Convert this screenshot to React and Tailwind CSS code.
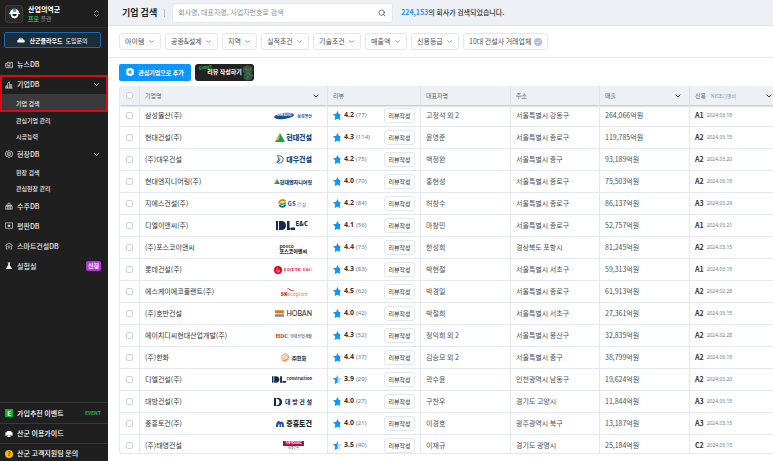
import React from "react";
import { ChevronDown, ChevronsUpDown, Search, Check } from "lucide-react";

const companies = [
  ["삼성물산(주)", "samsung", "4.2", 77, "고정석 외 2", "서울특별시 강동구", "264,066억원", "A1", "2024.03.15"],
  ["현대건설(주)", "hyundai", "4.3", 114, "윤영준", "서울특별시 종로구", "119,785억원", "A2", "2024.03.15"],
  ["(주)대우건설", "daewoo", "4.2", 75, "백정완", "서울특별시 중구", "93,189억원", "A2", "2024.03.20"],
  ["현대엔지니어링(주)", "hec", "4.0", 70, "홍현성", "서울특별시 종로구", "75,503억원", "A2", "2024.03.15"],
  ["지에스건설(주)", "gs", "4.2", 84, "허창수", "서울특별시 종로구", "86,137억원", "A3", "2024.03.29"],
  ["디엘이앤씨(주)", "dlenc", "4.1", 56, "마창민", "서울특별시 종로구", "52,757억원", "A1", "2024.03.21"],
  ["(주)포스코이앤씨", "posco", "4.4", 73, "한성희", "경상북도 포항시", "81,245억원", "A2", "2024.03.15"],
  ["롯데건설(주)", "lotte", "4.3", 83, "박현철", "서울특별시 서초구", "59,313억원", "A1", "2024.03.15"],
  ["에스케이에코플랜트(주)", "sk", "4.5", 62, "박경일", "서울특별시 종로구", "61,913억원", "A2", "2024.02.28"],
  ["(주)호반건설", "hoban", "4.0", 42, "박철희", "서울특별시 서초구", "27,361억원", "A2", "2024.03.15"],
  ["에이치디씨현대산업개발(주)", "hdc", "4.3", 52, "정익희 외 2", "서울특별시 용산구", "32,835억원", "A2", "2024.02.28"],
  ["(주)한화", "hanwha", "4.4", 37, "김승모 외 2", "서울특별시 중구", "38,799억원", "A2", "2024.03.15"],
  ["디엘건설(주)", "dlcon", "3.9", 29, "곽수윤", "인천광역시 남동구", "19,624억원", "A2", "2024.03.20"],
  ["대방건설(주)", "daebang", "4.0", 27, "구찬우", "경기도 고양시", "11,844억원", "A3", "2024.03.15"],
  ["중흥토건(주)", "jungheung", "4.0", 21, "이경호", "광주광역시 북구", "13,187억원", "A3", "2024.03.15"],
  ["(주)태영건설", "taeyoung", "3.5", 40, "이재규", "경기도 광명시", "25,184억원", "C2", "2024.03.15"],
];

const filters = ["아이템", "공종&설계", "지역", "실적조건", "기술조건", "매출액", "신용등급"];

function DLMark() {
  return (
    <svg viewBox="0 0 38 18" className="h-[9px] w-[19px]" fill="#16294a">
      <path d="M0 0h4v18H0zM6 0h4c7 0 10 4 10 9s-3 9-10 9H6zM22 0h5v13h2v5h-7zM30 13h8v5h-8z" />
    </svg>
  );
}

function Logo({ kind }) {
  switch (kind) {
    case "samsung":
      return (
        <>
          <span className="relative flex h-2 w-5 items-center justify-center">
            <svg viewBox="0 0 40 16" className="absolute inset-0 h-full w-full">
              <ellipse cx="20" cy="8" rx="20" ry="6" fill="#1450a0" transform="rotate(-7 20 8)" />
            </svg>
            <span className="relative text-[3px] leading-none font-bold text-white">SAMSUNG</span>
          </span>
          <span className="ml-[3px] text-[4px] font-bold text-[#2b55a5]">삼성물산</span>
        </>
      );
    case "hyundai":
      return (
        <>
          <svg viewBox="0 0 20 18" className="mr-px h-[9px] w-[10px]">
            <path d="M10 0 20 18H0z" fill="#12a04c" />
            <path d="M10 0 0 18 8 12z" fill="#f4b223" />
          </svg>
          <span className="text-[7px] font-black text-[#1c4680]">현대건설</span>
        </>
      );
    case "daewoo":
      return (
        <>
          <svg viewBox="0 0 18 18" className="mr-[2px] h-[9px] w-[8px]" fill="none" stroke="#1c4a84" strokeWidth="2">
            <path d="M2 1h6c6 0 8 4 8 8s-4 8-9 8H5M4 3c3 4 2 8-2 13M2 16c4-1 7-5 7-10" />
          </svg>
          <span className="text-[7px] font-black text-[#1c4680]">대우건설</span>
        </>
      );
    case "hec":
      return (
        <>
          <svg viewBox="0 0 14 12" className="h-[5px] w-[6px]">
            <path d="M7 0l7 12H0z" fill="#12a04c" />
            <path d="M7 0 0 12l5-4z" fill="#f4b223" />
          </svg>
          <span className="text-[5px] font-black text-[#1c4680]">현대엔지니어링</span>
        </>
      );
    case "gs":
      return (
        <span className="mr-[6px] flex items-center">
          <svg viewBox="0 0 18 18" className="mr-px h-[9px] w-[9px]" fill="none" strokeWidth="4">
            <path d="M2 9C2 3 9 0 15 4" stroke="#f08200" />
            <path d="M3 12c2 5 10 5 12-1" stroke="#0065b3" />
            <path d="M4 9c4 2 9 0 12-2" stroke="#44b549" />
          </svg>
          <span className="text-[6px] font-black text-[#1475bd]">GS</span>
          <span className="ml-px text-[5px] text-[#8b8f94]">건설</span>
        </span>
      );
    case "dlenc":
      return (
        <span className="mr-[4px] flex items-center">
          <DLMark />
          <span className="mb-1 ml-px text-[6px] font-black text-[#16294a]">E&amp;C</span>
        </span>
      );
    case "posco":
      return (
        <span className="mr-[5px] flex flex-col text-[#333]">
          <span className="text-[5px] leading-[5px] font-bold">posco</span>
          <span className="text-[5px] leading-[5px] font-black">포스코이앤씨</span>
        </span>
      );
    case "lotte":
      return (
        <>
          <svg viewBox="0 0 16 16" className="mr-[2px] h-[8px] w-[8px]">
            <circle cx="8" cy="8" r="8" fill="#e60020" />
            <path d="M8 3c-3 2-4 5-2 8 1 2 4 2 5-1 1-3-2-3-3-1" fill="none" stroke="white" strokeWidth="1.2" />
          </svg>
          <span className="font-['Liberation_Serif',serif] text-[5px] font-bold text-[#e60020]">LOTTE</span>
          <span className="ml-[2px] font-['Liberation_Serif',serif] text-[4px] font-bold text-[#e60020]">E&amp;C</span>
        </>
      );
    case "sk":
      return (
        <span className="mr-[4px] flex items-end">
          <span className="text-[5px] leading-[5px] font-black text-[#e2231a]">SK</span>
          <span className="flex flex-col">
            <svg viewBox="0 0 16 6" className="h-[3px] w-[8px]">
              <path d="M0 0c5 0 6 5 15 5-5 3-11-1-15-5z" fill="#e2231a" />
            </svg>
            <span className="text-[5px] leading-[5px] text-[#f17a21]">ecoplant</span>
          </span>
        </span>
      );
    case "hoban":
      return (
        <>
          <svg viewBox="0 0 18 13" className="mr-[2px] h-[7px] w-[9px]">
            <path d="M0 0h18v6H0z" fill="#ee7422" />
            <path d="M0 8h18v5H0z" fill="#85878c" />
          </svg>
          <span className="font-[Lato,sans-serif] text-[7px] font-medium text-[#333]">HOBAN</span>
        </>
      );
    case "hdc":
      return (
        <>
          <span className="font-['Liberation_Serif',serif] text-[6px] font-bold text-[#e2231a]">HDC</span>
          <span className="ml-px text-[4px] font-medium text-[#555]">현대산업개발</span>
        </>
      );
    case "hanwha":
      return (
        <span className="mr-[6px] flex items-center">
          <svg viewBox="0 0 18 18" className="mr-[2px] h-[9px] w-[9px]" fill="none" stroke="#f37321" strokeWidth="1.5">
            <path d="M15 12A7 7 0 1 1 14 4c2 2 2 6-1 8s-7 1-7-3 5-5 7-2 0 6-3 7-6 2-9 2" />
          </svg>
          <span className="text-[5px] font-black text-[#333]">㈜한화</span>
        </span>
      );
    case "dlcon":
      return (
        <>
          <svg viewBox="0 0 38 18" className="h-[7px] w-[14px]" fill="#16294a">
            <path d="M0 0h4v18H0zM6 0h4c7 0 10 4 10 9s-3 9-10 9H6zM22 0h5v13h2v5h-7zM30 13h8v5h-8z" />
          </svg>
          <span className="mb-1 text-[4px] font-bold text-[#16294a]">Construction</span>
        </>
      );
    case "daebang":
      return (
        <>
          <svg viewBox="0 0 16 16" className="mr-[3px] h-[8px] w-[8px]" fill="#16294a">
            <path d="M0 0h4v16H0zM5 0h3c6 0 8 4 8 8s-2 8-8 8H5v-2h1c4 0 5-3 5-6s-1-6-5-6H5z" />
          </svg>
          <span className="flex w-[27px] justify-between text-[6px] font-bold text-[#16294a]">
            <span>대</span><span>방</span><span>건</span><span>설</span>
          </span>
        </>
      );
    case "jungheung":
      return (
        <>
          <svg viewBox="0 0 16 12" className="mr-[2px] h-[6px] w-[8px]" fill="#1d57a5">
            <path d="M0 12C0 2 4 0 6 0l3 2 3-1c3 1 4 5 4 11h-4c0-5-1-6-2-6v6H7V6C5 6 4 8 4 12z" />
          </svg>
          <span className="text-[7px] font-black text-[#262626]">중흥토건</span>
        </>
      );
    default:
      return (
        <span className="mr-2 flex flex-col items-center">
          <span className="h-[5px] w-[21px] bg-[#a3154d] text-center text-[3px] leading-[5px] font-bold text-white">TAEYOUNG</span>
          <span className="text-[3px] leading-[5px] text-[#555]">태영건설</span>
        </span>
      );
  }
}

const starPath = "M9 0l2.7 5.9 6.3.8-4.600 4.400L14.600 18 9 14.800 3.400 18l1.200-6.900L0 6.700l6.300-.8z";

function Star({ rating }) {
  const split = rating >= 4 ? 14 : 9;
  return (
    <svg viewBox="0 0 18 18" className="h-[9px] w-[9px] shrink-0">
      <path d={starPath} fill="#cfd5dd" />
      <clipPath id={"star-" + split}>
        <rect width={split} height="18" />
      </clipPath>
      <path d={starPath} fill="#0a95ff" clipPath={"url(#star-" + split + ")"} />
    </svg>
  );
}

function Tick({ label }) {
  return (
    <input
      type="checkbox"
      aria-label={label}
      className="mx-auto block h-[7px] w-[7px] appearance-none rounded-[2px] border border-[#cbd2dc] bg-white checked:bg-[#0a95ff]"
    />
  );
}

const icons = {
  news: <path d="M5 3h12v12H3c-2 0-2-2-2-3V6h4m0-3v10M8 6h6M8 9h2v3H8zM12 9h2M12 12h2" />,
  company: <path d="M1 16h16M2 16v-5h3v5M6 16V5l4-3v14M12 16V8h3v8" />,
  site: (
    <>
      <path d="M9 1l3 2 4 1 1 5-1 5-4 1-3 2-3-2-4-1-1-5 1-5 4-1z" />
      <circle cx="9" cy="9" r="4" />
      <circle cx="9" cy="9" r="1" />
    </>
  ),
  order: <path d="M9 1v3M3 8c1-5 11-5 12 0zM1 16h16M2 9h14v7M2 9v7M6 9v7M9 9v7M12 9v7" />,
  reputation: (
    <>
      <path d="M1 2h16v12h-5l-3 2-3-2H1z" />
      <path d="M9 4l1 3h3l-2 2 1 3-3-2-3 2 1-3-2-2h3z" fill="currentColor" stroke="none" />
    </>
  ),
  smart: <path d="M1 8l8-6 8 6M3 8v8h3M15 8v8h-3M6 11c1-3 5-3 6 0M7 13c1-1 3-1 4 0M9 16v-1" />,
  lab: <path d="M6 1h6v1h-1v5l5 9H2l5-9V2H6z" fill="currentColor" stroke="none" />,
  guide: (
    <path d="M4 2h10v3h3v8h-3v-2H4v2H1V5h3zM5 12h8l-1 4H6z" fill="currentColor" stroke="none" />
  ),
};

function NavIcon({ name }) {
  return (
    <svg viewBox="0 0 18 18" className="h-2 w-2 shrink-0" fill="none" stroke="currentColor" strokeWidth="1.500">
      {icons[name]}
    </svg>
  );
}

function NavItem({ icon, label, open, badge, height = "h-5" }) {
  return (
    <a href="#" className={"flex items-center gap-1 pr-[7px] pl-[5px] text-[7px] font-medium text-[#e8e8e8] " + height}>
      <NavIcon name={icon} />
      <span>{label}</span>
      {open && <ChevronDown className="ml-auto h-[9px] w-[9px]" />}
      {badge && (
        <span className="ml-auto rounded-[2px] bg-[#b733dd] px-[2px] text-[6px] leading-[10px] font-bold text-white">{badge}</span>
      )}
    </a>
  );
}

function SubItem({ label, active, height = "h-4" }) {
  return (
    <a href="#" className={"flex items-center pl-4 text-[6px] font-medium text-[#e8e8e8] " + height + (active ? " bg-[#3a3a3d]" : "")}>
      {label}
    </a>
  );
}

function Sidebar() {
  return (
    <aside className="flex w-[108px] shrink-0 flex-col bg-[#1f1f1f] text-white">
      <div className="flex h-7 shrink-0 items-center border-b border-[#303030] pr-[7px] pl-[5px]">
        <span className="flex h-[18px] w-[18px] items-center justify-center rounded-[3px] border border-[#3c3c3c] bg-[#2a2a2a]">
          <svg viewBox="0 0 20 20" className="h-[11px] w-[11px]">
            <path d="M2 9C2 4 5 2 10 2s8 2 8 7z" fill="#fff" />
            <path d="M7 1h6v6H7z" fill="#1f9bf0" />
            <path d="M0 9h20v2H0z" fill="#fff" />
            <path d="M3 11h14c0 5-3 8-7 8s-7-3-7-8z" fill="#fff" />
            <path d="M6 11h8c0 3-2 4-4 4s-4-1-4-4z" fill="#222" />
          </svg>
        </span>
        <div className="ml-[5px] leading-[9px]">
          <div className="text-[7px] font-bold">산업의역군</div>
          <div className="text-[6px] text-[#8a8a8a]">
            <b className="text-[#2fc24d]">프로</b> 플랜
          </div>
        </div>
        <button aria-label="계정 전환" className="ml-auto">
          <ChevronsUpDown className="h-[9px] w-[9px] text-[#ccc]" />
        </button>
      </div>
      <button className="mr-[7px] ml-1 mt-1 flex h-4 shrink-0 items-center justify-center rounded-[2px] border border-[#1b69a8] bg-[#1b2c3a] text-[6px]">
        <svg viewBox="0 0 18 14" className="mr-1 h-[6px] w-2">
          <path d="M3 13c-4 0-4-6 0-6 0-6 11-6 12 0 4 0 4 6 0 6z" fill="#fff" />
          <path d="M7 1h4v5H7z" fill="#1f9bf0" />
        </svg>
        <b>산군클라우드</b>
        <span className="ml-[3px]">도입문의</span>
      </button>
      <nav className="mt-[6px] flex flex-col">
        <NavItem icon="news" label="뉴스DB" height="h-[21px]" />
        <div className="relative">
          <NavItem icon="company" label="기업DB" open height="h-[19px]" />
          <SubItem label="기업 검색" active height="h-[18px]" />
          <span className="pointer-events-none absolute inset-0 border-2 border-[#d80a12]" />
        </div>
        <SubItem label="관심기업 관리" />
        <SubItem label="시공능력" />
        <NavItem icon="site" label="현장DB" open />
        <SubItem label="현장 검색" />
        <SubItem label="관심현장 관리" />
        <NavItem icon="order" label="수주DB" />
        <NavItem icon="reputation" label="평판DB" />
        <NavItem icon="smart" label="스마트건설DB" />
        <NavItem icon="lab" label="실험실" badge="신청" />
      </nav>
      <div className="mt-auto">
        <a href="#" className="flex h-[21px] items-center gap-1 border-t border-[#383838] pr-[7px] pl-[5px] text-[7px] font-medium">
          <span className="flex h-2 w-2 items-center justify-center bg-[#15ab3a] text-[6px] font-bold">E</span>
          가입추천 이벤트
          <span className="ml-auto text-[5px] font-bold text-[#22b83f]">EVENT</span>
        </a>
        <a href="#" className="flex h-5 items-center gap-1 border-t border-[#383838] pl-[5px] text-[7px] font-medium">
          <NavIcon name="guide" />
          산군 이용가이드
        </a>
        <a href="#" className="flex h-[18px] items-center gap-1 border-t border-[#383838] pt-[2px] pl-[5px] text-[7px] font-medium">
          <span className="flex h-2 w-2 items-center justify-center rounded-full bg-[#f9b800] text-[6px] leading-none font-bold text-[#333]">?</span>
          산군 고객지원팀 문의
        </a>
      </div>
    </aside>
  );
}

function HeadCell({ children, sort }) {
  return (
    <th scope="col" className="border-l border-[#dde3ec] pr-[7px] pl-[5px] font-normal">
      <div className="flex items-center gap-[5px]">
        {children}
        {sort && <ChevronDown className="ml-auto h-2 w-2 text-[#333]" strokeWidth={3} />}
      </div>
    </th>
  );
}

function CompanyTable() {
  return (
    <div className="min-h-0 flex-1 overflow-hidden rounded-l-[4px] border-b border-l border-[#e3e8f0]">
      <table className="w-full min-w-[660px] table-fixed border-separate border-spacing-0 text-left text-[7px] text-[#4a4f57]">
        <colgroup>
          <col className="w-[19px]" />
          <col className="w-[188px]" />
          <col className="w-[93px]" />
          <col className="w-[90px]" />
          <col className="w-[89px]" />
          <col className="w-[90px]" />
          <col />
        </colgroup>
        <thead>
          <tr className="h-[19px] bg-[#edf1f6] text-[6px] text-[#5c626b] shadow-[0_1px_2px_rgba(60,70,90,0.4)]">
            <th className="p-0"><Tick label="전체 선택" /></th>
            <HeadCell sort>기업명</HeadCell>
            <HeadCell>리뷰</HeadCell>
            <HeadCell>대표자명</HeadCell>
            <HeadCell>주소</HeadCell>
            <HeadCell sort>매출</HeadCell>
            <HeadCell sort>신용<span className="text-[5px] text-[#8b919b]">NICE디앤비</span></HeadCell>
          </tr>
        </thead>
        <tbody className="[&_td]:border-b [&_td]:border-[#e3e8f0] [&_td]:py-0 [&_td+td]:border-l">
          {companies.map(([name, logo, rating, count, ceo, address, sales, grade, date]) => (
            <tr key={name} className="h-[22px]">
              <td className="px-0"><Tick label={name} /></td>
              <td className="pr-[15px] pl-[5px]">
                <div className="flex items-center justify-between">
                  <a href="#" className="text-[#333]">{name}</a>
                  <span className="flex h-3 items-center whitespace-nowrap leading-none"><Logo kind={logo} /></span>
                </div>
              </td>
              <td className="px-[5px]">
                <div className="flex items-center">
                  <Star rating={Number(rating)} />
                  <b className="ml-[2px] font-['Noto_Sans',sans-serif] text-[#333]">{rating}</b>
                  <span className="ml-[2px] font-['Noto_Sans',sans-serif] text-[6px] text-[#737983]">({count})</span>
                  <button className="ml-auto h-[15px] w-[31px] rounded-[3px] border border-[#e3e8f0] text-[6px] text-[#333]">리뷰작성</button>
                </div>
              </td>
              <td className="px-[5px]">{ceo}</td>
              <td className="px-[5px]">{address}</td>
              <td className="px-[5px]">{sales}</td>
              <td className="px-[5px]">
                <div className="flex items-center gap-[3px]">
                  <b className="text-[#333]">{grade}</b>
                  <span className="font-['Noto_Sans',sans-serif] text-[5px] text-[#737983]">{date}</span>
                </div>
              </td>
            </tr>
          ))}
        </tbody>
      </table>
    </div>
  );
}

export default function App() {
  return (
    <div className="flex h-screen overflow-hidden bg-white font-['Noto_Sans_CJK_KR',sans-serif] leading-normal whitespace-nowrap">
      <Sidebar />
      <main className="flex min-w-0 flex-1 flex-col">
        <header className="flex h-[26px] shrink-0 items-center border-b border-[#dce3ea] bg-[#edf1f6] pl-[14px]">
          <h1 className="text-[9px] font-bold text-[#262626]">기업 검색</h1>
          <span className="mx-[7px] h-2 w-px bg-[#b9bfc8]" />
          <div className="flex h-5 w-[221px] items-center rounded-[3px] border border-[#e3e8f0] bg-white pr-[6px] pl-[5px]">
            <input
              type="text"
              aria-label="검색어"
              placeholder="회사명, 대표자명, 사업자번호로 검색"
              className="min-w-0 flex-1 text-[7px] outline-none placeholder:text-[#8b9097]"
            />
            <button aria-label="검색"><Search className="h-2 w-2 text-[#333]" /></button>
          </div>
          <p className="ml-2 text-[7px] font-medium text-[#333]"><b className="text-[#2492f7]">224,153</b>의 회사가 검색되었습니다.</p>
        </header>
        <section className="flex h-8 shrink-0 items-center gap-1 border-b border-[#e6eaf0] pl-[11px]">
          {filters.map((name) => (
            <div key={name} className="relative flex items-center">
              <select aria-label={name} className="h-[17px] appearance-none rounded-[3px] border border-[#e3e8f0] bg-white pr-[15px] pl-[5px] text-[7px] text-[#4a4f57]">
                <option>{name}</option>
              </select>
              <ChevronDown className="pointer-events-none absolute right-[6px] h-[7px] w-[7px] text-[#555]" />
            </div>
          ))}
          <button aria-pressed="false" className="flex h-[17px] items-center gap-[3px] rounded-[3px] border border-[#e3e8f0] px-[5px] text-[7px] text-[#4a4f57]">
            10대 건설사 거래업체
            <span className="flex h-2 w-2 items-center justify-center rounded-full bg-[#b3bfd2]">
              <Check className="h-[6px] w-[6px] text-white" strokeWidth={3} />
            </span>
          </button>
        </section>
        <div className="flex min-h-0 flex-1 flex-col pb-[7px] pl-[11px]">
          <div className="flex h-7 shrink-0 items-center gap-1">
            <button className="flex h-[17px] w-[72px] items-center justify-center gap-1 rounded-[2px] bg-[#0a95ff] text-[6px] font-bold text-white">
              <svg viewBox="0 0 16 16" className="h-2 w-2">
                <circle cx="8" cy="8" r="8" fill="#fff" />
                <path d="M8 4v8M4 8h8" stroke="#0a95ff" strokeWidth="2.200" />
              </svg>
              관심기업으로 추가
            </button>
            <button className="relative flex h-[17px] w-[59px] items-center justify-center overflow-hidden rounded-[3px] bg-[#222] text-[6px] leading-none font-bold text-white">
              <svg viewBox="0 0 24 34" className="absolute top-0 right-0 h-[17px] w-3">
                <path d="M2 7l8-5 9 3 3 8-3 4 3 6-4 9-9 1-7-6 3-8-4-5z" fill="#31573f" />
                <path d="M5 9l7 4 7-5M6 23l6-6 7 7M9 30l4-6" stroke="#5f7d69" strokeWidth="2" fill="none" />
              </svg>
              <span className="absolute top-px left-1 -rotate-6 text-[4px] leading-[4px] text-[#22c94a]">EVENT</span>
              <span className="relative">리뷰 작성하기</span>
            </button>
          </div>
          <CompanyTable />
        </div>
      </main>
    </div>
  );
}
